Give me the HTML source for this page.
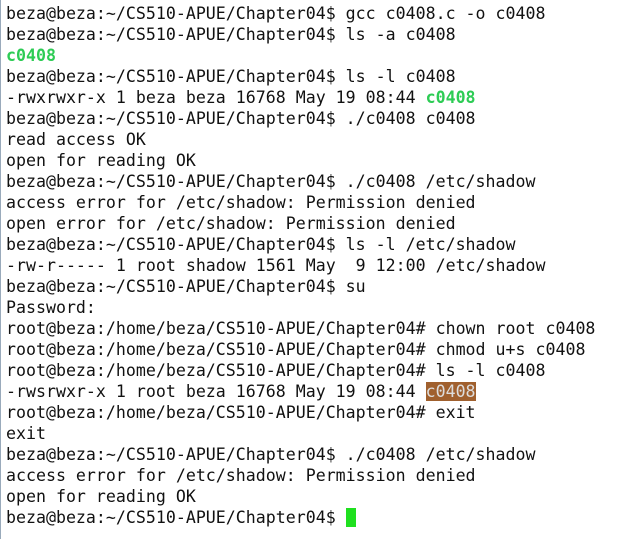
<!DOCTYPE html><html><head><style>
body{margin:0;background:#fff;width:641px;height:539px;overflow:hidden;border-left:1px solid #9ab;box-sizing:border-box}
pre{margin:0;position:absolute;left:6px;top:3px;font-family:"DejaVu Sans Mono","Liberation Mono",monospace;font-size:16.6px;line-height:21px;color:#111}
.g{color:#2ecc55;font-weight:bold}
.h{background:#a0602e;color:#ddd}
.c{display:inline-block;width:10px;height:19px;background:#1fe01f;vertical-align:-4px}
</style></head><body><pre>beza@beza:~/CS510-APUE/Chapter04$ gcc c0408.c -o c0408
beza@beza:~/CS510-APUE/Chapter04$ ls -a c0408
<span class="g">c0408</span>
beza@beza:~/CS510-APUE/Chapter04$ ls -l c0408
-rwxrwxr-x 1 beza beza 16768 May 19 08:44 <span class="g">c0408</span>
beza@beza:~/CS510-APUE/Chapter04$ ./c0408 c0408
read access OK
open for reading OK
beza@beza:~/CS510-APUE/Chapter04$ ./c0408 /etc/shadow
access error for /etc/shadow: Permission denied
open error for /etc/shadow: Permission denied
beza@beza:~/CS510-APUE/Chapter04$ ls -l /etc/shadow
-rw-r----- 1 root shadow 1561 May  9 12:00 /etc/shadow
beza@beza:~/CS510-APUE/Chapter04$ su
Password:
root@beza:/home/beza/CS510-APUE/Chapter04# chown root c0408
root@beza:/home/beza/CS510-APUE/Chapter04# chmod u+s c0408
root@beza:/home/beza/CS510-APUE/Chapter04# ls -l c0408
-rwsrwxr-x 1 root beza 16768 May 19 08:44 <span class="h">c0408</span>
root@beza:/home/beza/CS510-APUE/Chapter04# exit
exit
beza@beza:~/CS510-APUE/Chapter04$ ./c0408 /etc/shadow
access error for /etc/shadow: Permission denied
open for reading OK
beza@beza:~/CS510-APUE/Chapter04$ <span class="c"></span></pre></body></html>
